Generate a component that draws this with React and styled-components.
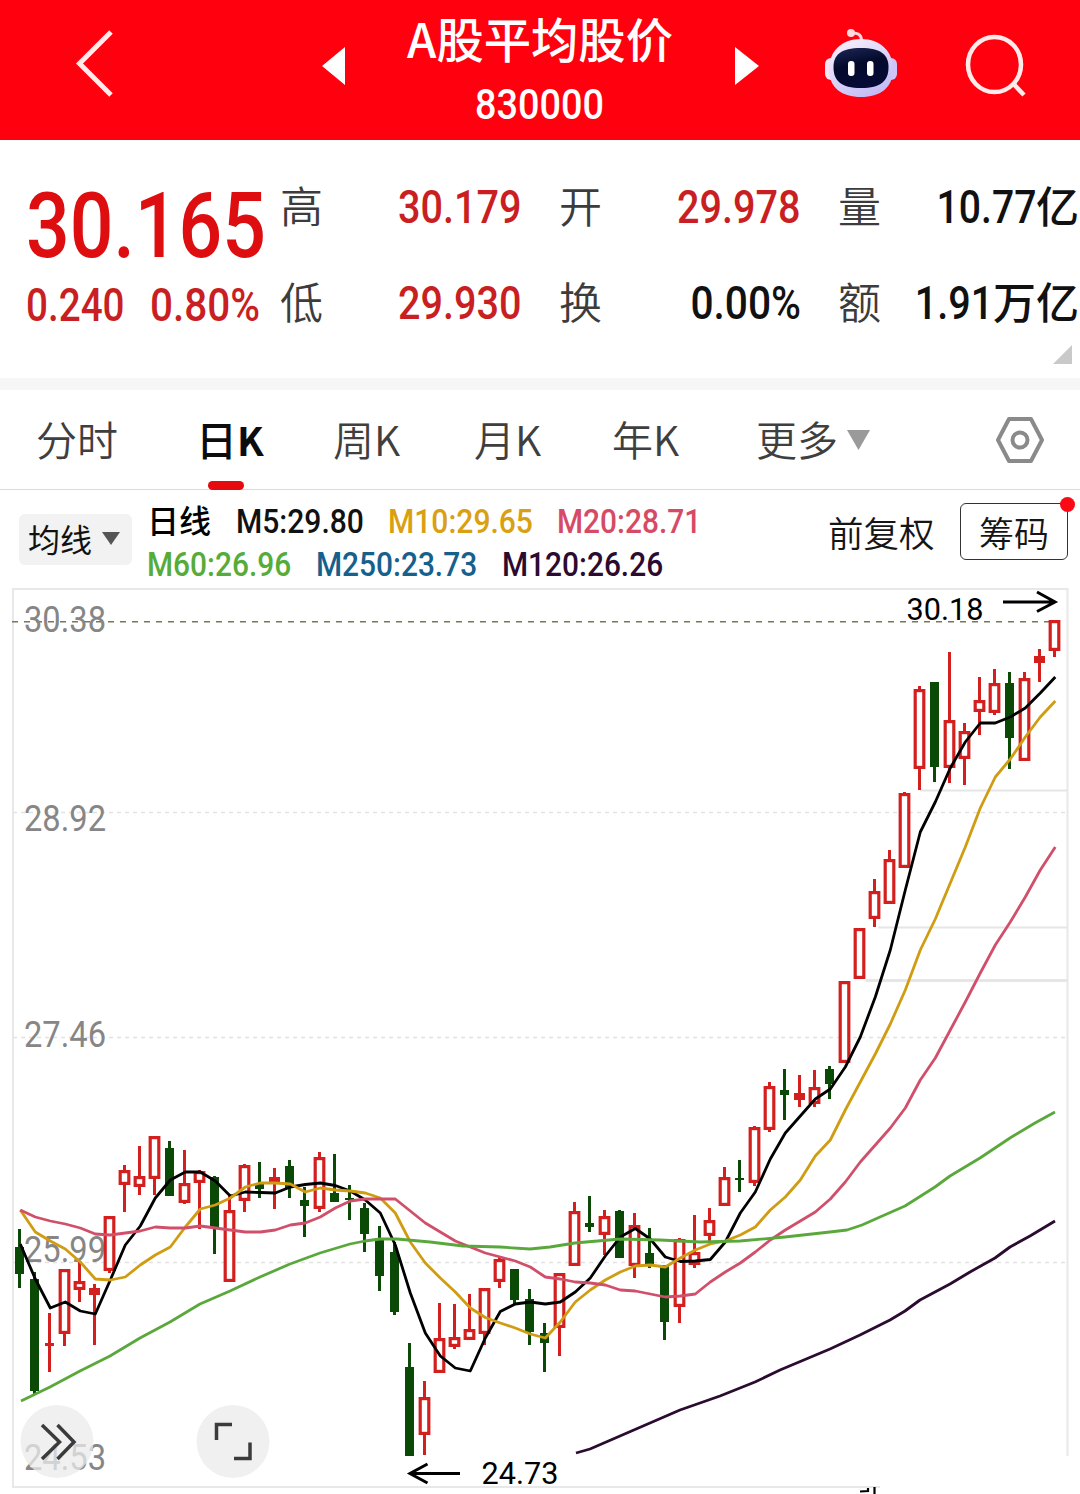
import styled, { createGlobalStyle } from "styled-components";

const GlobalStyle = createGlobalStyle`
  * {
    box-sizing: border-box;
  }

  body {
    margin: 0;
    background: white;
    font-family: "Noto Sans CJK SC", sans-serif;
    overflow: hidden;
  }
`;

/////////////////// DATA
// color, high, body top, body bottom, low
const candles = [
  ["g", 1229, 1247, 1274, 1288], ["g", 1272, 1279, 1391, 1395], ["r", 1313, 1343, 1346, 1372],
  ["r", 1269, 1269, 1334, 1346], ["r", 1261, 1281, 1290, 1302], ["r", 1284, 1288, 1295, 1345],
  ["r", 1216, 1216, 1271, 1273], ["r", 1165, 1170, 1185, 1212], ["r", 1146, 1176, 1187, 1195],
  ["r", 1136, 1136, 1179, 1195], ["g", 1141, 1148, 1196, 1196], ["r", 1150, 1183, 1203, 1204],
  ["r", 1170, 1171, 1183, 1229], ["g", 1176, 1177, 1227, 1254], ["r", 1195, 1210, 1282, 1282],
  ["r", 1164, 1165, 1201, 1212], ["g", 1162, 1184, 1189, 1198], ["r", 1168, 1177, 1182, 1209],
  ["g", 1160, 1166, 1188, 1198], ["g", 1187, 1200, 1206, 1237], ["r", 1152, 1157, 1209, 1212],
  ["g", 1154, 1193, 1202, 1202], ["g", 1185, 1198, 1200, 1220], ["g", 1203, 1208, 1234, 1252],
  ["g", 1226, 1238, 1276, 1291], ["g", 1242, 1252, 1312, 1315], ["g", 1343, 1367, 1456, 1456],
  ["r", 1381, 1397, 1435, 1455], ["r", 1303, 1338, 1373, 1373], ["r", 1304, 1337, 1347, 1349],
  ["r", 1294, 1329, 1340, 1340], ["r", 1288, 1288, 1334, 1345], ["r", 1257, 1259, 1282, 1288],
  ["g", 1269, 1269, 1300, 1305], ["g", 1289, 1299, 1332, 1345], ["g", 1323, 1333, 1343, 1372],
  ["r", 1273, 1273, 1328, 1356], ["r", 1202, 1211, 1266, 1266], ["g", 1196, 1223, 1227, 1232],
  ["r", 1210, 1216, 1235, 1255], ["g", 1210, 1211, 1258, 1258], ["r", 1213, 1225, 1266, 1278],
  ["g", 1228, 1253, 1265, 1268], ["g", 1265, 1265, 1322, 1340], ["r", 1238, 1239, 1307, 1323],
  ["r", 1215, 1252, 1265, 1268], ["r", 1208, 1220, 1236, 1243], ["r", 1167, 1177, 1206, 1206],
  ["g", 1160, 1178, 1180, 1192], ["r", 1126, 1127, 1183, 1186], ["r", 1082, 1086, 1130, 1132],
  ["g", 1069, 1090, 1095, 1120], ["r", 1075, 1093, 1100, 1107], ["r", 1070, 1087, 1104, 1107],
  ["g", 1066, 1069, 1084, 1099], ["r", 981, 981, 1063, 1063], ["r", 928, 928, 979, 979],
  ["r", 879, 891, 919, 927], ["r", 850, 859, 904, 904], ["r", 792, 793, 868, 868],
  ["r", 686, 689, 769, 790], ["g", 682, 682, 767, 782], ["r", 652, 720, 768, 783],
  ["r", 723, 731, 759, 785], ["r", 677, 700, 712, 735], ["r", 669, 683, 713, 715],
  ["g", 672, 683, 738, 769], ["r", 672, 678, 761, 761], ["r", 649, 656, 663, 682],
  ["r", 620, 620, 651, 657],
];

const m5 = [
  1244, 1279, 1308, 1302, 1311, 1314, 1280, 1245, 1226, 1198, 1180, 1172, 1172, 1181, 1196, 1192,
  1192.5, 1193, 1187, 1184.5, 1183, 1185.5, 1191, 1200, 1213, 1245, 1293, 1333, 1356, 1368, 1371,
  1338, 1311.5, 1304, 1302, 1304, 1302, 1292, 1278, 1256, 1237, 1228.5, 1239, 1257, 1261.5, 1261,
  1259.5, 1242, 1213, 1192, 1159, 1133, 1116, 1099, 1089, 1067, 1037, 997, 950, 890, 832, 802, 768,
  742, 723, 723, 717, 708, 693, 677,
];

const m10 = [
  1210, 1232, 1241, 1249, 1262, 1279, 1280, 1277, 1265, 1255, 1247, 1227, 1209, 1205, 1198, 1187,
  1183, 1183, 1184, 1192, 1188, 1190, 1191, 1193, 1198, 1213, 1242, 1263, 1278, 1292, 1308, 1317.5,
  1323, 1328, 1334, 1338, 1322, 1302, 1290, 1280, 1272, 1266, 1265, 1267, 1258, 1250, 1244, 1241,
  1235, 1227, 1210, 1197, 1180, 1156, 1140, 1110, 1082, 1054, 1024, 990, 950, 919, 883, 847, 808,
  777, 759, 737, 717, 701,
];

const m20 = [
  1210, 1217, 1221, 1224, 1228, 1234, 1235, 1233, 1231, 1227, 1228, 1228, 1226, 1228, 1230, 1232,
  1232, 1230, 1225, 1223, 1217, 1208, 1201, 1199, 1199, 1199, 1211, 1223, 1232, 1241, 1247, 1253,
  1257, 1261, 1267, 1277, 1279, 1282, 1283, 1285, 1290, 1291, 1294, 1297, 1296, 1294, 1282, 1272,
  1263, 1252, 1240, 1230, 1221, 1212, 1199, 1182, 1162, 1145, 1128, 1108, 1080, 1058, 1030, 1002,
  973, 945, 922, 897, 870, 847,
];

const m60 =
  "21,1401 50,1387 80,1371 110,1356 140,1338 170,1322 200,1304 230,1291 260,1277 290,1264 320,1253 350,1244 365,1241 380,1239 397,1239 430,1242 463,1246 500,1247 530,1249 550,1247 575,1243 620,1239 660,1240 700,1242 740,1241 785,1237 830,1232 847,1230 862,1225 880,1217 905,1206 935,1187 950,1176 980,1158 1010,1138 1035,1123 1055,1112";

const m120 =
  "576,1453 590,1449 620,1436 650,1423 680,1410 720,1396 755,1382 780,1370 830,1349 860,1335 890,1320 905,1311 920,1300 950,1284 970,1272 995,1258 1010,1247 1030,1236 1055,1221";

const axisLabels = [
  { text: "30.38", y: 632 },
  { text: "28.92", y: 831 },
  { text: "27.46", y: 1047 },
  { text: "25.99", y: 1262 },
  { text: "24.53", y: 1470 },
];

const tabs = ["分时", "日K", "周K", "月K", "年K"];

const toPoints = (list) => list.map((y, i) => `${20.3 + i * 15},${y}`).join(" ");

/////////////////// STYLED COMPONENTS
const Page = styled.div`
  width: 1080px;
  height: 1494px;
  overflow: hidden;
`;

// Condensed digits: the box has the final width, the inner text is squeezed into it
const DigitBox = styled.span`
  display: inline-flex;
  justify-content: ${(props) => (props.$right ? "flex-end" : "flex-start")};
  width: ${(props) => props.$width}px;
  height: ${(props) => props.$size}px;
  line-height: ${(props) => props.$size}px;
  font-family: Roboto, sans-serif;
  font-size: ${(props) => props.$size}px;
  font-weight: ${(props) => props.$weight || 500};
  color: ${(props) => props.$color};
  white-space: nowrap;
`;

const DigitText = styled.span`
  transform: scaleX(${(props) => props.$scale});
  transform-origin: ${(props) => (props.$right ? "right" : "left")} center;
`;

const Header = styled.header`
  display: grid;
  grid-template-columns: 322px 23px 390px 23px 62px 82px 1fr;
  height: 140px;
  background: #ff000e;
  color: #fff;

  svg {
    display: block;
  }
`;

const BackIcon = styled.svg`
  margin: 28px 0 0 70px;
`;

const ArrowIcon = styled.svg`
  margin-top: 47px;
`;

const TitleBlock = styled.div`
  display: flex;
  flex-direction: column;
  align-items: center;
`;

const Title = styled.h1`
  margin: 11px 0 12px;
  height: 60px;
  line-height: 54px;
  font-size: 47.3px;
  font-weight: 500;
  white-space: nowrap;
`;

const RobotIcon = styled.svg`
  margin: 27px 0 0 65px;
`;

const SearchIcon = styled.svg`
  margin: 30px 0 0 60px;
`;

const Quote = styled.section`
  display: flex;
  height: 239px;
  padding-left: 26px;
`;

const PriceBlock = styled.div`
  width: 254px;
  padding-top: 41px;
`;

const ChangeRow = styled.div`
  display: flex;
  gap: 26px;
  margin-top: 10px;
`;

const StatColumn = styled.div`
  width: ${(props) => props.$width}px;
  margin-right: ${(props) => props.$gap || 0}px;
  padding-top: 43px;
`;

const Stat = styled.div`
  display: flex;
  align-items: center;
  justify-content: space-between;
  height: 48px;
  margin-bottom: 48px;
`;

const StatLabel = styled.span`
  margin-top: -6px;
  font-size: 43px;
  font-weight: 350;
  line-height: 48px;
  color: #3c3c3c;
`;

const StatValue = styled.span`
  display: flex;
  align-items: center;
  color: #111;
`;

const StatUnit = styled.span`
  margin-top: -6px;
  font-size: 43px;
  font-weight: 500;
  line-height: 48px;
`;

const Fold = styled.svg`
  display: block;
  margin: -34px 8px 0 auto;
`;

const Divider = styled.div`
  height: 12px;
  margin-top: 14px;
  background: #f6f6f6;
`;

const TabBar = styled.nav`
  display: grid;
  grid-template-columns: 160px 137px 141px 138px 144px 239px 1fr;
  height: 100px;
  padding-left: 36px;
  border-bottom: 1px solid #dcdcdc;
`;

const Tab = styled.div`
  display: flex;
  flex-direction: column;
  align-items: flex-start;
  font-size: 41px;
  font-weight: ${(props) => (props.$active ? 500 : 350)};
  line-height: 60px;
  padding-top: 18px;
  color: ${(props) => (props.$active ? "#0c0c0c" : "#3f3f3f")};

  b {
    font-size: 39px;
    font-weight: 700;
  }
`;

const Underline = styled.div`
  width: 36px;
  height: 9px;
  margin: 12px 0 0 12px;
  border-radius: 5px;
  background: #e60a0f;
`;

const MoreTab = styled(Tab)`
  flex-direction: row;
  gap: 9px;

  svg {
    margin-top: 22px;
  }
`;

const HexIcon = styled.svg`
  margin-top: 24px;
`;

const Toolbar = styled.section`
  display: flex;
  height: 98px;
`;

const MaButton = styled.button`
  display: flex;
  align-items: center;
  gap: 9px;
  width: 113px;
  height: 51px;
  margin: 24px 15px 0 19px;
  padding: 0 0 3px 9px;
  border: none;
  border-radius: 6px;
  background: #f2f2f2;
  font: 400 32px "Noto Sans CJK SC", sans-serif;
  color: #111;
`;

const Legend = styled.div`
  width: 681px;
  padding-top: 10px;
`;

const LegendRow = styled.div`
  display: flex;
  align-items: center;
  gap: ${(props) => props.$gap}px;
  height: 43px;
`;

const LegendName = styled.span`
  width: 64px;
  margin-top: -6px;
  font-size: 32px;
  font-weight: 500;
  line-height: 40px;
`;

const Adjust = styled.span`
  width: 132px;
  padding-top: 17px;
  font-size: 35.5px;
  font-weight: 350;
  line-height: 50px;
  color: #151515;
`;

const ChipButton = styled.div`
  position: relative;
  width: 108px;
  height: 57px;
  margin-top: 13px;
  border: 1.5px solid #333;
  border-radius: 6px;
  font-size: 35px;
  font-weight: 350;
  line-height: 55px;
  text-align: center;
  color: #151515;
`;

const Dot = styled.span`
  position: absolute;
  top: -7px;
  right: -8px;
  width: 15px;
  height: 15px;
  border-radius: 50%;
  background: #fa0a14;
`;

const Chart = styled.svg`
  display: block;
  font-family: Roboto, sans-serif;
`;
/////////////////// STYLED COMPONENTS

function Digits({ size, width, scale = 0.86, weight, color, right, children }) {
  return (
    <DigitBox $size={size} $width={width} $weight={weight} $color={color} $right={right}>
      <DigitText $scale={scale} $right={right}>
        {children}
      </DigitText>
    </DigitBox>
  );
}

function Robot() {
  return (
    <RobotIcon width="76" height="74" viewBox="823 27 76 74">
      <defs>
        <linearGradient id="shell" x1="0" y1="0" x2="0.6" y2="1">
          <stop offset="0" stopColor="#fff4f8" />
          <stop offset="0.55" stopColor="#dcd6fa" />
          <stop offset="1" stopColor="#c3bdf5" />
        </linearGradient>
        <linearGradient id="visor" x1="0.3" y1="0" x2="0.6" y2="1">
          <stop offset="0" stopColor="#1a2350" />
          <stop offset="0.4" stopColor="#030a2c" />
          <stop offset="1" stopColor="#050b35" />
        </linearGradient>
      </defs>
      <path d="M851 33 Q861 32 861.500 40" fill="none" stroke="#ffd3da" strokeWidth="3" />
      <circle cx="851" cy="33" r="4" fill="#ffd9de" />
      <rect x="825" y="58" width="13" height="22" rx="6" fill="#f4e4f6" />
      <rect x="884" y="58" width="13" height="22" rx="6" fill="#cfc4f7" />
      <path
        d="M861 39 C881 39 893 52 893 69 C893 88 880 97 861 97 C842 97 829 88 829 69 C829 52 841 39 861 39 Z"
        fill="url(#shell)"
      />
      <path
        d="M861 48 C881 48 888.500 55 888.500 67 C888.500 81 881 88 861 88 C841 88 833.500 81 833.500 67 C833.500 55 841 48 861 48 Z"
        fill="url(#visor)"
      />
      <rect x="848" y="61" width="6.500" height="15" rx="3" fill="#fff" />
      <rect x="867" y="61" width="6.500" height="15" rx="3" fill="#fff" />
    </RobotIcon>
  );
}

function TopBar() {
  return (
    <Header>
      <BackIcon width="50" height="72" viewBox="70 28 50 72">
        <path d="M111 32 L79.500 63.500 L111 95" fill="none" stroke="#ffecec" strokeWidth="5" />
      </BackIcon>
      <ArrowIcon width="23" height="38" viewBox="0 0 23 38">
        <path d="M23 0 V38 L0 19 Z" fill="#fff" />
      </ArrowIcon>
      <TitleBlock>
        <Title>A股平均股价</Title>
        <Digits size={43} width={130} scale={0.88}>
          830000
        </Digits>
      </TitleBlock>
      <ArrowIcon width="24" height="38" viewBox="0 0 24 38">
        <path d="M0 0 V38 L24 19 Z" fill="#fff" />
      </ArrowIcon>
      <Robot />
      <div />
      <SearchIcon width="66" height="70" viewBox="962 30 66 70">
        <ellipse cx="994.500" cy="64.500" rx="26.500" ry="27.500" fill="none" stroke="#ffe9e9" strokeWidth="4.500" />
        <path d="M1013.500 84 L1024 95" stroke="#ffe9e9" strokeWidth="4.500" />
      </SearchIcon>
    </Header>
  );
}

function StatItem({ label, width, scale, unit, color = "#111", children }) {
  return (
    <Stat>
      <StatLabel>{label}</StatLabel>
      <StatValue>
        <Digits size={46} width={width} scale={scale} color={color} right>
          {children}
        </Digits>
        {unit ? <StatUnit>{unit}</StatUnit> : null}
      </StatValue>
    </Stat>
  );
}

function Candle({ x, data }) {
  const [type, high, top, bottom, low] = data;
  if (type === "g") {
    return (
      <g fill="#0b4a06">
        <rect x={x - 1.5} y={high} width="3" height={low - high} />
        <rect x={x - 4.5} y={top} width="9" height={Math.max(bottom - top, 2)} />
      </g>
    );
  }
  const height = bottom - top;
  return (
    <g fill="#d3201f">
      <rect x={x - 1.5} y={high} width="3" height={top - high} />
      <rect x={x - 1.5} y={bottom} width="3" height={low - bottom} />
      {height < 8 ? (
        <rect x={x - (height < 4 ? 4.5 : 5.5)} y={top} width={height < 4 ? 9 : 11} height={height} />
      ) : (
        <rect
          x={x - 4.3}
          y={top + 1.6}
          width="8.6"
          height={height - 3.2}
          fill="#fff"
          stroke="#d3201f"
          strokeWidth="3.2"
        />
      )}
    </g>
  );
}

function KLineChart() {
  return (
    <Chart width="1080" height="906" viewBox="0 588 1080 906">
      {/* frame */}
      <path d="M880 1487 H13 V589 H1067.500 V1456" fill="none" stroke="#e8e8e8" strokeWidth="2" />
      {/* grid */}
      <g stroke="#e2e2e2" strokeWidth="1.300" strokeDasharray="4 4">
        <path d="M13 812.500 H1067" />
        <path d="M13 1037.500 H1067" />
        <path d="M13 1262.500 H1067" />
      </g>
      <g stroke="#e6e6e6" strokeWidth="2">
        <path d="M920 790.500 H1067" />
        <path d="M878 927.500 H1067" />
        <path d="M866 980.500 H1067" strokeWidth="3" />
      </g>
      <path d="M12 621.800 H1055" stroke="#77775a" strokeWidth="1.500" strokeDasharray="6 6" />

      <g fill="#868686" fontSize="36">
        {axisLabels.map((label) => (
          <text key={label.text} x="24" y={label.y} textLength="82" lengthAdjust="spacingAndGlyphs">
            {label.text}
          </text>
        ))}
      </g>

      {candles.map((data, i) => (
        <Candle key={i} x={19.5 + i * 15} data={data} />
      ))}

      <g fill="none" strokeWidth="2.800" strokeLinejoin="round">
        <polyline points={m120} stroke="#2b0b30" />
        <polyline points={toPoints(m5)} stroke="#000" />
        <polyline points={toPoints(m10)} stroke="#cf9c12" />
        <polyline points={toPoints(m20)} stroke="#d0506b" />
        <polyline points={m60} stroke="#5aa83c" />
      </g>

      {/* highest and lowest price */}
      <g fill="none" stroke="#000" strokeWidth="3">
        <path d="M1003 602 H1054 M1037 592 L1055 602 L1037 611.500" />
        <path d="M460 1473.500 H411 M427.500 1464 L410 1473.500 L427.500 1483" />
      </g>
      <g fill="#000" fontSize="31">
        <text x="906.500" y="620" textLength="77" lengthAdjust="spacingAndGlyphs">
          30.18
        </text>
        <text x="481.500" y="1484" textLength="77" lengthAdjust="spacingAndGlyphs">
          24.73
        </text>
      </g>

      {/* floating buttons */}
      <g fill="#ebebeb" fillOpacity="0.75">
        <circle cx="57" cy="1441.500" r="36.500" />
        <circle cx="233" cy="1441.500" r="36.500" />
      </g>
      <g fill="none" stroke="#3b3b3b" strokeWidth="3.500">
        <path d="M42 1425 L59.500 1442 L42 1459 M57.500 1425 L74 1442 L57.500 1459" />
        <path d="M232 1424.500 H216.500 V1440 M250 1442.500 V1458.500 H234" />
      </g>

      <path d="M860 1491.500 L868 1491 V1488 M874.500 1487 V1494" fill="none" stroke="#000" strokeWidth="2.200" />
    </Chart>
  );
}

function App() {
  return (
    <>
      <GlobalStyle />
      <Page>
        <TopBar />
        <Quote>
          <PriceBlock>
            <Digits size={91} width={240} scale={0.845} color="#dd0d10">
              30.165
            </Digits>
            <ChangeRow>
              <Digits size={46} width={98} scale={0.84} color="#c91f22">
                0.240
              </Digits>
              <Digits size={46} width={112} scale={0.88} color="#c91f22">
                0.80%
              </Digits>
            </ChangeRow>
          </PriceBlock>
          <StatColumn $width={242} $gap={37}>
            <StatItem label="高" width={122} color="#c91f22">
              30.179
            </StatItem>
            <StatItem label="低" width={122} color="#c91f22">
              29.930
            </StatItem>
          </StatColumn>
          <StatColumn $width={242} $gap={37}>
            <StatItem label="开" width={122} color="#c91f22">
              29.978
            </StatItem>
            <StatItem label="换" width={112} scale={0.885}>
              0.00%
            </StatItem>
          </StatColumn>
          <StatColumn $width={241}>
            <StatItem label="量" width={98} scale={0.85} unit="亿">
              10.77
            </StatItem>
            <StatItem label="额" width={72} unit="万亿">
              1.91
            </StatItem>
          </StatColumn>
        </Quote>
        <Fold width="19" height="19" viewBox="0 0 19 19">
          <path d="M19 0 V19 H0 Z" fill="#c9c9c9" />
        </Fold>
        <Divider />
        <TabBar>
          {tabs.map((name) =>
            name === "日K" ? (
              <Tab key={name} $active>
                <span>
                  日<b>K</b>
                </span>
                <Underline />
              </Tab>
            ) : (
              <Tab key={name}>{name}</Tab>
            )
          )}
          <MoreTab>
            更多
            <svg width="23" height="20" viewBox="0 0 23 20">
              <path d="M0 0 H23 L11.500 20 Z" fill="#9a9a9a" />
            </svg>
          </MoreTab>
          <HexIcon width="50" height="52" viewBox="-25 -26 50 52">
            <path
              d="M-11 -21 H11 L22 0 L11 21 H-11 L-22 0 Z"
              fill="none"
              stroke="#8a8a8a"
              strokeWidth="4"
              strokeLinejoin="round"
            />
            <circle r="7.500" fill="none" stroke="#8a8a8a" strokeWidth="4" />
          </HexIcon>
        </TabBar>
        <Toolbar>
          <MaButton>
            均线
            <svg width="20" height="13" viewBox="0 0 20 13">
              <path d="M1 0 H19 L10 13 Z" fill="#555" />
            </svg>
          </MaButton>
          <Legend>
            <LegendRow $gap={25}>
              <LegendName>日线</LegendName>
              <Digits size={33} width={127} scale={0.91} color="#111">
                M5:29.80
              </Digits>
              <Digits size={33} width={144} scale={0.91} color="#d9a012">
                M10:29.65
              </Digits>
              <Digits size={33} width={144} scale={0.905} color="#d64a66">
                M20:28.71
              </Digits>
            </LegendRow>
            <LegendRow $gap={25}>
              <Digits size={33} width={144} scale={0.905} color="#56ac38">
                M60:26.96
              </Digits>
              <Digits size={33} width={161} scale={0.905} color="#16608c">
                M250:23.73
              </Digits>
              <Digits size={33} width={161} scale={0.905} color="#2b0b30">
                M120:26.26
              </Digits>
            </LegendRow>
          </Legend>
          <Adjust>前复权</Adjust>
          <ChipButton>
            筹码
            <Dot />
          </ChipButton>
        </Toolbar>
        <KLineChart />
      </Page>
    </>
  );
}

export default App;
